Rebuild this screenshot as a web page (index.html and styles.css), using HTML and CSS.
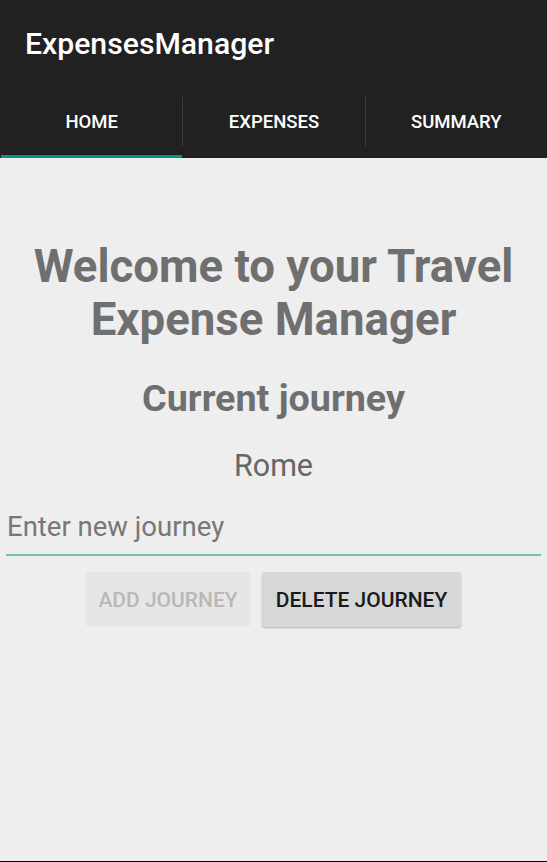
FILE: index.html
```html
<!DOCTYPE html>
<html>
<head>
<meta charset="utf-8">
<link rel="stylesheet" href="styles.css">
</head>
<body>
<div class="app">
  <header class="appbar">
    <div class="toolbar">ExpensesManager</div>
    <nav class="tabs">
      <div class="tab active">HOME</div>
      <div class="sep"></div>
      <div class="tab">EXPENSES</div>
      <div class="sep"></div>
      <div class="tab">SUMMARY</div>
    </nav>
  </header>
  <main class="content">
    <h1 class="welcome">Welcome to your Travel Expense Manager</h1>
    <h2 class="current">Current journey</h2>
    <div class="journey">Rome</div>
    <div class="field">
      <input class="input" type="text" placeholder="Enter new journey">
    </div>
    <div class="buttons">
      <button class="btn disabled">ADD JOURNEY</button>
      <button class="btn raised">DELETE JOURNEY</button>
    </div>
  </main>
  <div class="bottomline"></div>
</div>
</body>
</html>
```
FILE: styles.css
```css
* { box-sizing: border-box; }
html, body { margin: 0; padding: 0; }
body {
  width: 547px;
  height: 862px;
  font-family: Roboto, "Noto Sans", sans-serif;
  background: #eeeeee;
  overflow: hidden;
}
.app {
  display: flex;
  flex-direction: column;
  height: 862px;
}
.appbar {
  background: #212121;
  color: #fff;
}
.toolbar {
  height: 90px;
  padding-left: 25px;
  padding-bottom: 3px;
  display: flex;
  align-items: center;
  font-size: 30.2px;
  font-weight: 500;
}
.tabs {
  display: flex;
  height: 68px;
  padding-left: 1px;
}
.tab {
  flex: 1;
  height: 68px;
  display: flex;
  align-items: center;
  justify-content: center;
  font-size: 18.5px;
  font-weight: 500;
  padding-bottom: 1px;
  border-bottom: 3px solid transparent;
}
.tab.active { border-bottom-color: #009688; }
.sep {
  width: 1px;
  height: 49px;
  background: #3c3c3c;
  margin-top: 7px;
}
.content {
  flex: 1;
  display: flex;
  flex-direction: column;
  align-items: center;
  padding: 82px 6px 0;
  color: #6f6f6f;
}
.welcome {
  margin: 0;
  font-size: 45.6px;
  line-height: 53px;
  font-weight: 700;
  text-align: center;
  width: 530px;
}
.current {
  margin: 30px 0 0;
  font-size: 37.7px;
  line-height: 44px;
  font-weight: 700;
}
.journey {
  margin-top: 28px;
  font-size: 30.5px;
  line-height: 36px;
  color: #666;
}
.field {
  align-self: stretch;
  margin-top: 14px;
}
.input {
  display: block;
  width: 535px;
  height: 58px;
  border: 0;
  border-bottom: 2px solid #77c0b4;
  background: transparent;
  font-family: inherit;
  font-size: 27.5px;
  line-height: 32px;
  padding: 12px 1px;
  color: #333;
  outline: none;
}
.input::placeholder { color: #777; }
.buttons {
  display: flex;
  gap: 12px;
  margin-top: 16px;
}
.btn {
  height: 55px;
  border: 0;
  border-radius: 3px;
  font-family: inherit;
  font-size: 21px;
  font-weight: 500;
  padding: 0;
}
.btn.disabled {
  width: 164px;
  background: #e6e6e6;
  color: #b8b8b8;
}
.btn.raised {
  width: 199px;
  background: #d6d7d7;
  color: #1a1a1a;
  box-shadow: 0 1px 2px rgba(0,0,0,0.25);
}
.bottomline {
  height: 1px;
  background: #000;
}
```
